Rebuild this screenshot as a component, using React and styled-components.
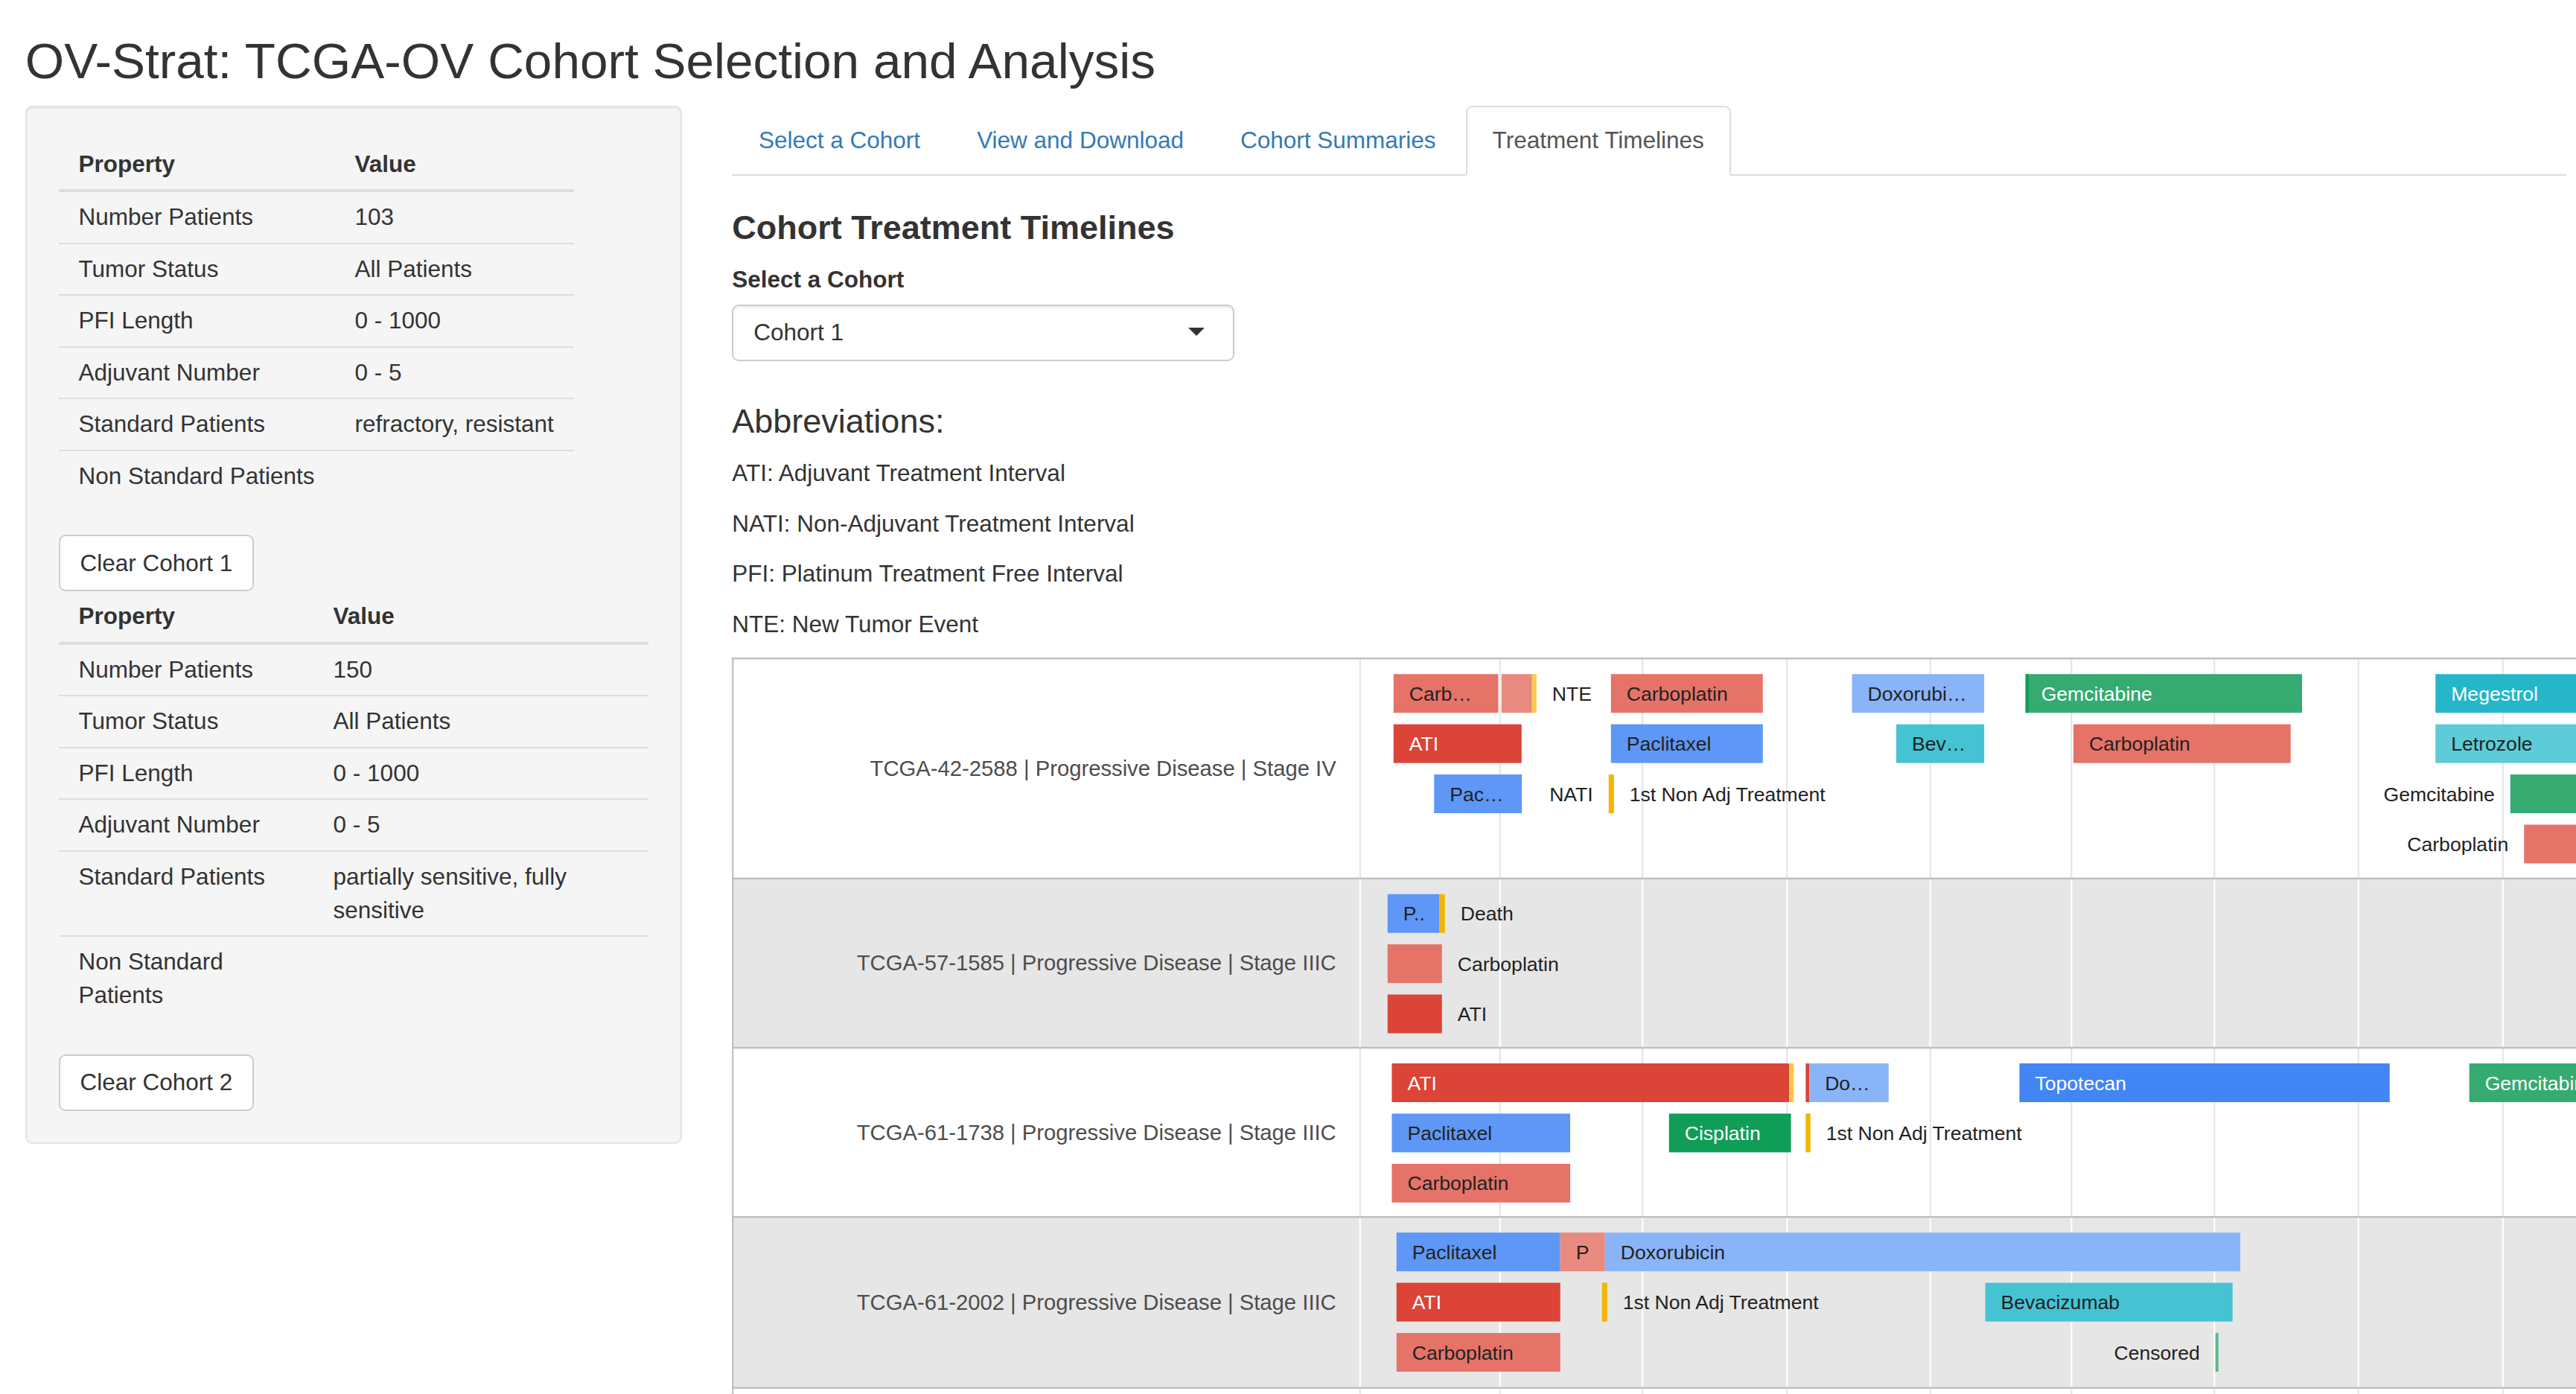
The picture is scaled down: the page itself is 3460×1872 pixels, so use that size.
import React from "react";
import styled, { createGlobalStyle } from "styled-components";

// page was captured at 225% zoom, everything below is written in bootstrap css px
const ZOOM = 2.25;

const GlobalStyle = createGlobalStyle`
  html, body {
    margin: 0;
    padding: 0;
    overflow: hidden;
    background: #fff;
  }
  body {
    zoom: ${ZOOM};
    font-family: "Liberation Sans", Arial, Helvetica, sans-serif;
    font-size: 14px;
    line-height: 1.42857143;
    color: #333;
  }
  * {
    box-sizing: border-box;
  }
`;

const cohort1 = [
  ["Number Patients", "103"],
  ["Tumor Status", "All Patients"],
  ["PFI Length", "0 - 1000"],
  ["Adjuvant Number", "0 - 5"],
  ["Standard Patients", "refractory, resistant"],
  ["Non Standard Patients", ""],
];

const cohort2 = [
  ["Number Patients", "150"],
  ["Tumor Status", "All Patients"],
  ["PFI Length", "0 - 1000"],
  ["Adjuvant Number", "0 - 5"],
  ["Standard Patients", "partially sensitive, fully sensitive"],
  ["Non Standard Patients", ""],
];

const tabs = ["Select a Cohort", "View and Download", "Cohort Summaries", "Treatment Timelines"];

const abbreviations = [
  "ATI: Adjuvant Treatment Interval",
  "NATI: Non-Adjuvant Treatment Interval",
  "PFI: Platinum Treatment Free Interval",
  "NTE: New Tumor Event",
];

// ---- timeline chart (coordinates in screen pixels of the original capture) ----
const VB = { x: 983.25, y: 884.25, w: 2656, h: 1016 };
const GRID = [1827, 2015, 2206.5, 2400.5, 2593, 2782.5, 2974.5, 3168, 3362, 3556];
const LANE_TOP = 21.5;
const LANE_STEP = 67.4;
const BAR_H = 52;
const END = 3640;

const SALMON = "#e57368";
const LIGHT_SALMON = "#e98a80";
const RED = "#db4437";
const BLUE = "#5e97f6";
const DOXO = "#8ab4f8";
const GREEN = "#35ab71";
const TEAL = "#46c3d2";
const LIGHT_TEAL = "#5ecbd8";
const DARK_TEAL = "#26b6c9";
const TOPO = "#4285f4";
const CIS = "#0f9d58";
const ORANGE = "#f4b400";
const LIGHT_ORANGE = "#fbc94b";
const CENSOR = "#57bb8a";

const rows = [
  {
    label: "TCGA-42-2588 | Progressive Disease | Stage IV",
    top: 885,
    bottom: 1180.5,
    shade: false,
    bars: [
      { lane: 0, x1: 1872, x2: 2012.7, color: SALMON, text: "Carb…" },
      { lane: 0, x1: 2017, x2: 2058, color: LIGHT_SALMON },
      { lane: 0, x1: 2058, x2: 2064, color: LIGHT_ORANGE, after: "NTE" },
      { lane: 0, x1: 2164, x2: 2368, color: SALMON, text: "Carboplatin" },
      { lane: 0, x1: 2487.8, x2: 2665.4, color: DOXO, text: "Doxorubi…" },
      { lane: 0, x1: 2720.9, x2: 3092.3, color: GREEN, text: "Gemcitabine", light: true },
      { lane: 0, x1: 2720.9, x2: 2725, color: CIS },
      { lane: 0, x1: 3271.5, x2: END, color: DARK_TEAL, text: "Megestrol", light: true },
      { lane: 1, x1: 1872, x2: 2044, color: RED, text: "ATI", light: true },
      { lane: 1, x1: 2164, x2: 2368, color: BLUE, text: "Paclitaxel" },
      { lane: 1, x1: 2547.3, x2: 2665.4, color: TEAL, text: "Bev…" },
      { lane: 1, x1: 2785.2, x2: 3077, color: SALMON, text: "Carboplatin" },
      { lane: 1, x1: 3271.5, x2: END, color: LIGHT_TEAL, text: "Letrozole" },
      { lane: 2, x1: 1926.5, x2: 2044.4, color: BLUE, text: "Pac…" },
      { lane: 2, x1: 2161, x2: 2168, color: ORANGE, before: "NATI", after: "1st Non Adj Treatment" },
      { lane: 2, x1: 3372, x2: END, color: GREEN, before: "Gemcitabine" },
      { lane: 3, x1: 3390.5, x2: END, color: SALMON, before: "Carboplatin" },
    ],
  },
  {
    label: "TCGA-57-1585 | Progressive Disease | Stage IIIC",
    top: 1180.5,
    bottom: 1407.8,
    shade: true,
    bars: [
      { lane: 0, x1: 1864, x2: 1933.7, color: BLUE, text: "P.." },
      { lane: 0, x1: 1933.7, x2: 1941, color: ORANGE, after: "Death" },
      { lane: 1, x1: 1864, x2: 1937, color: SALMON, after: "Carboplatin" },
      { lane: 2, x1: 1864, x2: 1937, color: RED, after: "ATI" },
    ],
  },
  {
    label: "TCGA-61-1738 | Progressive Disease | Stage IIIC",
    top: 1407.8,
    bottom: 1635,
    shade: false,
    bars: [
      { lane: 0, x1: 1869.7, x2: 2403.5, color: RED, text: "ATI", light: true },
      { lane: 0, x1: 2403.5, x2: 2409.8, color: LIGHT_ORANGE },
      { lane: 0, x1: 2425.6, x2: 2430.4, color: RED },
      { lane: 0, x1: 2430.4, x2: 2537, color: DOXO, text: "Do…" },
      { lane: 0, x1: 2712.7, x2: 3210, color: TOPO, text: "Topotecan", light: true },
      { lane: 0, x1: 3316.9, x2: END, color: GREEN, text: "Gemcitabine", light: true },
      { lane: 1, x1: 1869.7, x2: 2109.3, color: BLUE, text: "Paclitaxel" },
      { lane: 1, x1: 2242, x2: 2405.8, color: CIS, text: "Cisplatin", light: true },
      { lane: 1, x1: 2425.6, x2: 2432, color: ORANGE, after: "1st Non Adj Treatment" },
      { lane: 2, x1: 1869.7, x2: 2109.3, color: SALMON, text: "Carboplatin" },
    ],
  },
  {
    label: "TCGA-61-2002 | Progressive Disease | Stage IIIC",
    top: 1635,
    bottom: 1864.6,
    shade: true,
    bars: [
      { lane: 0, x1: 1876, x2: 2095.9, color: BLUE, text: "Paclitaxel" },
      { lane: 0, x1: 2095.9, x2: 2156, color: LIGHT_SALMON, text: "P" },
      { lane: 0, x1: 2156, x2: 3009.3, color: DOXO, text: "Doxorubicin" },
      { lane: 1, x1: 1876, x2: 2095.9, color: RED, text: "ATI", light: true },
      { lane: 1, x1: 2152, x2: 2159, color: ORANGE, after: "1st Non Adj Treatment" },
      { lane: 1, x1: 2666.8, x2: 2999, color: TEAL, text: "Bevacizumab" },
      { lane: 2, x1: 1876, x2: 2095.9, color: SALMON, text: "Carboplatin" },
      { lane: 2, x1: 2976, x2: 2980, color: CENSOR, before: "Censored" },
    ],
  },
  { label: "", top: 1864.6, bottom: VB.y + VB.h, shade: false, bars: [] },
];

const Timeline = () => (
  <ChartSvg viewBox={`${VB.x} ${VB.y} ${VB.w} ${VB.h}`}>
    {rows.map((row) => (
      <g key={row.top}>
        <rect x={VB.x} y={row.top} width={VB.w} height={row.bottom - row.top} fill={row.shade ? "#e6e6e6" : "#fff"} />
        {GRID.map((gx) => (
          <line key={gx} x1={gx} x2={gx} y1={row.top} y2={row.bottom} stroke={row.shade ? "#fff" : "#e6e6e6"} strokeWidth="2.25" />
        ))}
      </g>
    ))}
    {rows.map((row) => (
      <line key={row.top} x1={VB.x} x2={VB.x + VB.w} y1={row.top + 0.5} y2={row.top + 0.5} stroke="#c0c0c0" strokeWidth="2.5" />
    ))}
    <line x1="984.5" x2="984.5" y1="885" y2={VB.y + VB.h} stroke="#c0c0c0" strokeWidth="2.25" />
    {rows.map((row) => (
      <g key={row.top}>
        {row.label && (
          <RowLabel x="1795" y={(row.top + row.bottom) / 2 + 10.5} textAnchor="end">
            {row.label}
          </RowLabel>
        )}
        {row.bars.map((bar, i) => {
          const top = row.top + LANE_TOP + bar.lane * LANE_STEP;
          const base = top + BAR_H / 2 + 9.5;
          return (
            <g key={i}>
              <rect x={bar.x1} y={top} width={bar.x2 - bar.x1} height={BAR_H} fill={bar.color} />
              {bar.text && (
                <BarText x={bar.x1 + 21} y={base} $light={bar.light}>
                  {bar.text}
                </BarText>
              )}
              {bar.after && (
                <BarText x={bar.x2 + 21} y={base}>
                  {bar.after}
                </BarText>
              )}
              {bar.before && (
                <BarText x={bar.x1 - 21} y={base} textAnchor="end">
                  {bar.before}
                </BarText>
              )}
            </g>
          );
        })}
      </g>
    ))}
  </ChartSvg>
);

const PropertyTable = ({ data }) => (
  <PropTable>
    <thead>
      <tr>
        <th>Property</th>
        <th>Value</th>
      </tr>
    </thead>
    <tbody>
      {data.map(([k, v]) => (
        <tr key={k}>
          <td>{k}</td>
          <td>{v}</td>
        </tr>
      ))}
    </tbody>
  </PropTable>
);

const App = () => {
  return (
    <Page>
      <GlobalStyle />
      <Title>OV-Strat: TCGA-OV Cohort Selection and Analysis</Title>
      <Layout>
        <Well>
          <PropertyTable data={cohort1} />
          <Button>Clear Cohort 1</Button>
          <PropertyTable data={cohort2} />
          <Button>Clear Cohort 2</Button>
        </Well>
        <Main>
          <Tabs>
            {tabs.map((t) => (
              <li key={t}>
                <TabLink href="#" $active={t === "Treatment Timelines"}>
                  {t}
                </TabLink>
              </li>
            ))}
          </Tabs>
          <SectionTitle>Cohort Treatment Timelines</SectionTitle>
          <FormGroup>
            <FieldLabel>Select a Cohort</FieldLabel>
            <SelectBox>Cohort 1</SelectBox>
          </FormGroup>
          <AbbrTitle>Abbreviations:</AbbrTitle>
          {abbreviations.map((a) => (
            <Para key={a}>{a}</Para>
          ))}
          <Timeline />
        </Main>
      </Layout>
    </Page>
  );
};
export default App;

const Page = styled.div`
  display: flow-root;
  padding: 0 15px;
`;

const Title = styled.h1`
  margin: 20px 0 10px;
  font-size: 30px;
  font-weight: 400;
  line-height: 1.1;
  color: #333;
`;

const Layout = styled.div`
  display: flex;
  align-items: flex-start;
  gap: 30px;
`;

const Well = styled.div`
  flex: 0 0 392px;
  padding: 19px;
  background-color: #f5f5f5;
  border: 1px solid #e3e3e3;
  border-radius: 4px;
  box-shadow: inset 0 1px 1px rgba(0, 0, 0, 0.05);
`;

const PropTable = styled.table`
  border-collapse: collapse;
  border-spacing: 0;
  max-width: 100%;
  margin-bottom: 20px;

  th {
    text-align: left;
    font-weight: bold;
    padding: 5px 12px;
    line-height: 20px;
    vertical-align: bottom;
    border-bottom: 2px solid #ddd;
  }

  td {
    padding: 5px 12px;
    line-height: 20px;
    vertical-align: top;
    border-top: 1px solid #ddd;
  }

  tbody tr:first-child td {
    border-top: 0;
  }
`;

const Button = styled.button`
  display: block;
  margin: 0;
  padding: 6px 12px;
  font-family: inherit;
  font-size: 14px;
  line-height: 20px;
  color: #333;
  background-color: #fff;
  border: 1px solid #ccc;
  border-radius: 4px;
  cursor: pointer;
`;

const Main = styled.div`
  flex: 0 0 1095px;
  min-width: 0;
`;

const Tabs = styled.ul`
  display: flex;
  margin: 0;
  padding: 0;
  list-style: none;
  border-bottom: 1px solid #ddd;

  li {
    margin-bottom: -1px;
  }
`;

const TabLink = styled.a`
  display: block;
  margin-right: 2px;
  padding: 10px 15px;
  line-height: 20px;
  text-decoration: none;
  border: 1px solid transparent;
  border-radius: 4px 4px 0 0;
  color: ${(p) => (p.$active ? "#555" : "#337ab7")};
  background-color: ${(p) => (p.$active ? "#fff" : "transparent")};
  border-color: ${(p) => (p.$active ? "#ddd #ddd transparent" : "transparent")};
`;

const SectionTitle = styled.h3`
  margin: 20px 0 10px;
  font-size: 20px;
  font-weight: bold;
  line-height: 1.1;
`;

const FormGroup = styled.div`
  width: 300px;
`;

const FieldLabel = styled.label`
  display: inline-block;
  margin-bottom: 5px;
  font-weight: bold;
`;

const SelectBox = styled.div`
  position: relative;
  padding: 6px 12px;
  line-height: 20px;
  color: #333;
  background: #fff;
  border: 1px solid #ccc;
  border-radius: 4px;
  box-shadow: inset 0 1px 1px rgba(0, 0, 0, 0.075);

  &::after {
    content: "";
    position: absolute;
    top: 50%;
    right: 17px;
    margin-top: -3px;
    border-style: solid;
    border-width: 5px 5px 0 5px;
    border-color: #333 transparent transparent transparent;
  }
`;

const AbbrTitle = styled.h3`
  margin: 25px 0 10px;
  font-size: 20px;
  font-weight: 400;
  line-height: 1.1;
`;

const Para = styled.p`
  margin: 0 0 10px;
`;

const ChartSvg = styled.svg`
  display: block;
  width: ${VB.w / ZOOM}px;
  height: ${VB.h / ZOOM}px;
  font-family: "Liberation Sans", Arial, sans-serif;
`;

const RowLabel = styled.text`
  font-size: 29.25px;
  fill: #4d4d4d;
`;

const BarText = styled.text`
  font-size: 26.6px;
  fill: ${(p) => (p.$light ? "#fff" : "#222")};
`;
